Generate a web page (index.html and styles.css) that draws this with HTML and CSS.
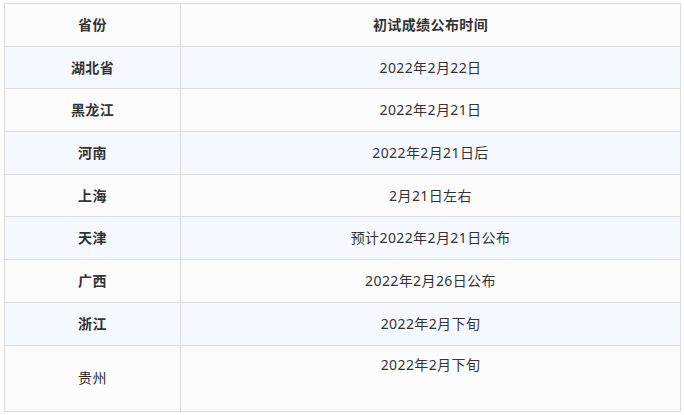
FILE: index.html
```html
<!DOCTYPE html>
<html lang="zh-CN">
<head>
<meta charset="utf-8">
<link rel="stylesheet" href="styles.css">
</head>
<body>
<div class="wrap">
<table class="score-table">
  <colgroup><col class="c1"><col class="c2"></colgroup>
  <thead>
    <tr><th>省份</th><th>初试成绩公布时间</th></tr>
  </thead>
  <tbody>
    <tr class="alt"><td class="prov">湖北省</td><td>2022年2月22日</td></tr>
    <tr><td class="prov">黑龙江</td><td>2022年2月21日</td></tr>
    <tr class="alt"><td class="prov">河南</td><td>2022年2月21日后</td></tr>
    <tr><td class="prov">上海</td><td>2月21日左右</td></tr>
    <tr class="alt"><td class="prov">天津</td><td>预计2022年2月21日公布</td></tr>
    <tr><td class="prov">广西</td><td>2022年2月26日公布</td></tr>
    <tr class="alt"><td class="prov">浙江</td><td>2022年2月下旬</td></tr>
    <tr class="last"><td class="prov normal">贵州</td><td class="top">2022年2月下旬</td></tr>
  </tbody>
</table>
</div>
</body>
</html>
```
FILE: styles.css
```css
html, body {
  margin: 0;
  padding: 0;
  background: #ffffff;
}
.wrap {
  padding: 3px 0 0 4px;
}
.score-table {
  border-collapse: collapse;
  width: 677px;
  table-layout: fixed;
  font-family: "Noto Sans", "Noto Sans CJK SC", sans-serif;
  font-size: 14px;
  letter-spacing: 0.4px;
  color: #333333;
  background: #fcfcfc;
}
.c1 { width: 176px; }
.score-table th,
.score-table td {
  border: 1px solid #dcdcdc;
  height: 41.7px;
  padding: 0 8px;
  text-align: center;
  vertical-align: middle;
  line-height: 22px;
}
.score-table th {
  font-weight: bold;
  background: #fcfcfc;
}
.score-table .prov {
  font-weight: bold;
}
.score-table .prov.normal {
  font-weight: normal;
  color: #2a2a2a;
}
.score-table tr.alt td {
  background: #f5f9ff;
}
.score-table tr.last td {
  height: 65px;
}
.score-table tr.last td.top {
  vertical-align: top;
  padding-top: 8px;
  height: 57px;
}
```
